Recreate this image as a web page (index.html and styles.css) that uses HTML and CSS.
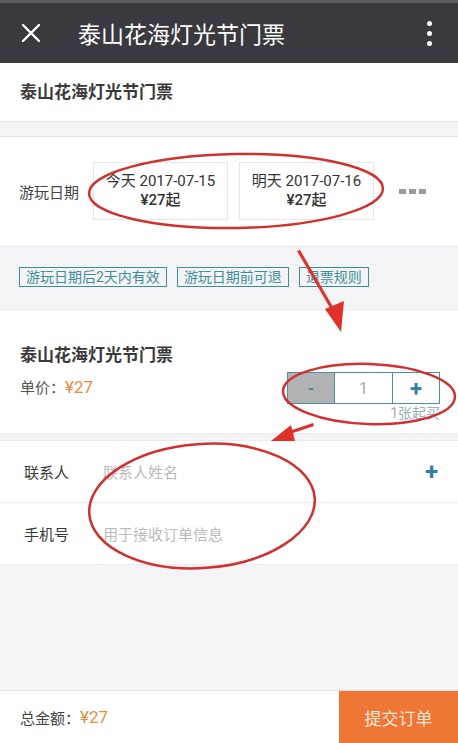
FILE: index.html
```html
<!DOCTYPE html>
<html lang="zh-CN">
<head>
    <meta charset="UTF-8">
    <meta name="viewport" content="width=device-width, initial-scale=1.0">
    <title>泰山花海灯光节门票</title>
    <link rel="stylesheet" href="styles.css">
</head>
<body>
    <div class="page">
        <div class="topbar">
            <svg class="close-icon" width="20" height="20" viewBox="0 0 20 20">
                <path d="M2 2 L18 18 M18 2 L2 18" stroke="#fff" stroke-width="2.4" stroke-linecap="round"/>
            </svg>
            <div class="topbar-title">泰山花海灯光节门票</div>
            <div class="menu-dots"><span></span><span></span><span></span></div>
        </div>

        <div class="section name-section">泰山花海灯光节门票</div>

        <div class="section date-section">
            <div class="date-label">游玩日期</div>
            <div class="date-box">
                <div>今天 2017-07-15</div>
                <div class="date-price">¥27起</div>
            </div>
            <div class="date-box">
                <div>明天 2017-07-16</div>
                <div class="date-price">¥27起</div>
            </div>
            <div class="more-dots"><span></span><span></span><span></span></div>
        </div>

        <div class="tags">
            <span class="tag">游玩日期后2天内有效</span>
            <span class="tag">游玩日期前可退</span>
            <span class="tag">退票规则</span>
        </div>

        <div class="section product-section">
            <div class="product-title">泰山花海灯光节门票</div>
            <div class="product-row">
                <div class="unit-price">单价：<span class="price">¥27</span></div>
                <div class="stepper-wrap">
                    <div class="stepper">
                        <div class="step step-minus">-</div>
                        <div class="step step-value">1</div>
                        <div class="step step-plus">+</div>
                    </div>
                    <div class="min-buy">1张起买</div>
                </div>
            </div>
        </div>

        <div class="section contact-section">
            <div class="contact-row">
                <div class="contact-label">联系人</div>
                <div class="contact-input">联系人姓名</div>
                <div class="contact-add">+</div>
            </div>
            <div class="contact-row">
                <div class="contact-label">手机号</div>
                <div class="contact-input">用于接收订单信息</div>
            </div>
        </div>

        <div class="filler"></div>

        <div class="bottombar">
            <div class="total">总金额：<span class="price">¥27</span></div>
            <div class="submit">提交订单</div>
        </div>

        <svg class="marks" width="458" height="743" viewBox="0 0 458 743">
            <g fill="none" stroke="#d0302f" stroke-width="2.5">
                <ellipse cx="236" cy="191" rx="147" ry="37" transform="rotate(-1 236 191)"/>
                <ellipse cx="369" cy="394" rx="86" ry="30" transform="rotate(2 369 394)"/>
                <ellipse cx="202" cy="506" rx="113" ry="62" transform="rotate(-4 202 506)"/>
            </g>
            <g fill="#e0302a">
                <polygon points="297,251 300,250 336,312 333,313"/>
                <polygon points="325,309 344,301 341,332"/>
                <polygon points="313,423 314,426 290,434 289,431"/>
                <polygon points="291,425 295,441 271,441"/>
            </g>
        </svg>
    </div>
</body>
</html>
```

FILE: styles.css
```css
body {
    margin: 0;
    font-family: Roboto, "Noto Sans CJK SC", sans-serif;
    background: #f4f4f6;
    color: #333;
}

.page {
    position: relative;
    width: 458px;
    height: 743px;
    display: flex;
    flex-direction: column;
    overflow: hidden;
}

/* top bar */
.topbar {
    height: 60px;
    border-top: 3px solid #5b5a60;
    background: #3a393f;
    display: flex;
    align-items: center;
    padding: 0 0 0 21px;
    flex-shrink: 0;
}

.close-icon {
    margin-right: 37px;
}

.topbar-title {
    color: #fff;
    font-size: 23px;
    flex: 1;
}

.menu-dots {
    width: 58px;
    display: flex;
    flex-direction: column;
    align-items: center;
    gap: 5px;
}

.menu-dots span {
    width: 5px;
    height: 5px;
    border-radius: 50%;
    background: #fff;
}

.section {
    background: #fff;
}

.name-section {
    height: 58px;
    line-height: 58px;
    padding-left: 20px;
    font-size: 17px;
    font-weight: bold;
    color: #3a3a3a;
    border-bottom: 1px solid #e6e6ea;
    margin-bottom: 14px;
}

/* dates */
.date-section {
    height: 109px;
    display: flex;
    align-items: center;
    padding-left: 19px;
    border-top: 1px solid #e8e8ec;
    border-bottom: 1px solid #e8e8ec;
}

.date-label {
    font-size: 15px;
    color: #444;
    margin-right: 14px;
}

.date-box {
    width: 133px;
    height: 56px;
    border: 1px solid #e6e6e6;
    display: flex;
    flex-direction: column;
    justify-content: center;
    align-items: center;
    font-size: 15px;
    line-height: 19px;
    color: #333;
    margin-right: 11px;
    margin-bottom: 2px;
}

.date-price {
    font-weight: 500;
}

.more-dots {
    display: flex;
    gap: 3px;
    margin-left: 14px;
}

.more-dots span {
    width: 7px;
    height: 5px;
    background: #9a9a9a;
}

/* tags */
.tags {
    height: 64px;
    display: flex;
    align-items: center;
    padding-left: 19px;
    padding-bottom: 4px;
    box-sizing: border-box;
    gap: 10px;
}

.tag {
    border: 1.5px solid #3d8e9b;
    color: #3d8e9b;
    font-size: 14px;
    line-height: 18px;
    padding: 0 6px;
}

/* product */
.product-section {
    height: 122px;
    padding: 0 18px 0 20px;
    border-bottom: 1px solid #ececee;
    margin-bottom: 6px;
}

.product-title {
    font-size: 17px;
    font-weight: bold;
    color: #3a3a3a;
    margin-top: 30px;
}

.product-row {
    display: flex;
    justify-content: space-between;
    align-items: flex-start;
}

.unit-price {
    font-size: 15px;
    color: #555;
    margin-top: 10px;
}

.price {
    color: #ec8a3e;
    font-size: 17px;
}

.stepper-wrap {
    display: flex;
    flex-direction: column;
    align-items: flex-end;
    margin-top: 6px;
}

.stepper {
    display: flex;
    border: 1px solid #4f8ca2;
    height: 30px;
}

.step {
    display: flex;
    align-items: center;
    justify-content: center;
    font-size: 16px;
}

.step-minus {
    width: 46px;
    background: #b2b2b4;
    color: #4f7f92;
    font-weight: bold;
    border-right: 1px solid #4f8ca2;
}

.step-value {
    width: 57px;
    color: #aaa;
    border-right: 1px solid #4f8ca2;
}

.step-plus {
    width: 46px;
    color: #2d7fa9;
    font-size: 22px;
    font-weight: bold;
}

.min-buy {
    font-size: 14px;
    color: #94aebb;
    line-height: 18px;
}

/* contact */
.contact-section {
    border-top: 1px solid #ececee;
    border-bottom: 1px solid #ececee;
}

.contact-row {
    height: 61px;
    display: flex;
    align-items: center;
    padding: 0 20px 0 24px;
    font-size: 15px;
}

.contact-row + .contact-row {
    border-top: 1px solid #ececee;
}

.contact-label {
    color: #3a3a3a;
    width: 79px;
}

.contact-input {
    color: #bbb;
    flex: 1;
}

.contact-add {
    color: #2d7fa9;
    font-size: 24px;
    font-weight: bold;
}

.filler {
    flex: 1;
}

/* bottom */
.bottombar {
    height: 52px;
    background: #fff;
    border-top: 1px solid #e2e2e4;
    display: flex;
    align-items: stretch;
    flex-shrink: 0;
}

.total {
    flex: 1;
    display: flex;
    align-items: center;
    padding-left: 20px;
    font-size: 15px;
    color: #444;
}

.submit {
    width: 119px;
    background: #f07636;
    color: #fde8da;
    font-size: 17px;
    display: flex;
    align-items: center;
    justify-content: center;
}

.marks {
    position: absolute;
    left: 0;
    top: 0;
    pointer-events: none;
}
```
